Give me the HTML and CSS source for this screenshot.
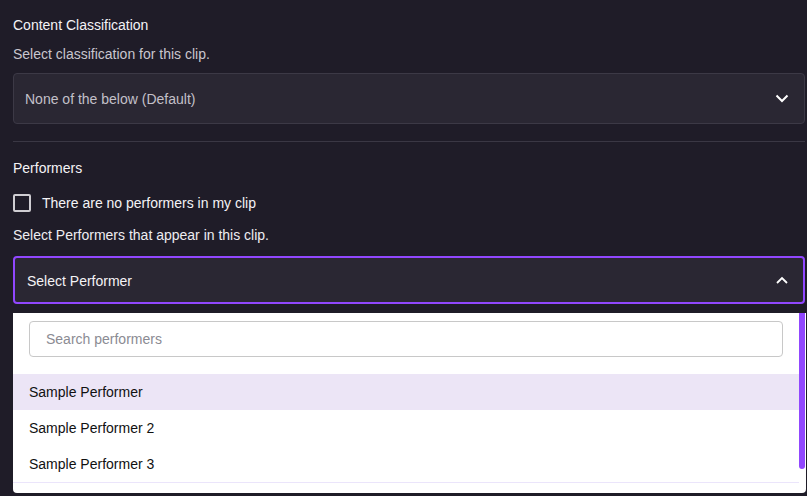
FILE: index.html
```html
<!DOCTYPE html>
<html lang="en">
<head>
<meta charset="utf-8">
<link rel="stylesheet" href="styles.css">
</head>
<body>
<div class="page">
  <section class="group">
    <div class="title">Content Classification</div>
    <div class="desc">Select classification for this clip.</div>
    <div class="select">
      <span class="value">None of the below (Default)</span>
      <svg class="chev" width="14" height="9" viewBox="0 0 14 9"><path d="M1.5 1.5 L7 7 L12.5 1.5" fill="none" stroke="#ffffff" stroke-width="2"/></svg>
    </div>
  </section>
  <hr class="divider">
  <section class="group">
    <div class="title">Performers</div>
    <label class="check-row"><span class="box"></span><span class="check-label">There are no performers in my clip</span></label>
    <div class="desc desc-white">Select Performers that appear in this clip.</div>
    <div class="select select-open">
      <span class="value value-white">Select Performer</span>
      <svg class="chev chev-up" width="14" height="9" viewBox="0 0 14 9"><path d="M2 7 L7 2 L12 7" fill="none" stroke="#ffffff" stroke-width="1.8"/></svg>
    </div>
    <div class="menu">
      <div class="menu-search"><div class="search">Search performers</div></div>
      <div class="item item-active">Sample Performer</div>
      <div class="item">Sample Performer 2</div>
      <div class="item">Sample Performer 3</div>
      <div class="menu-foot"></div>
      <div class="scroll-thumb"></div>
    </div>
  </section>
</div>
</body>
</html>
```
FILE: styles.css
```css
html, body {
  margin: 0;
  padding: 0;
  background: #1f1c28;
  font-family: "Liberation Sans", Arial, sans-serif;
  font-size: 14px;
  color: #efeff1;
  overflow: hidden;
}
.page {
  padding: 15px 2px 0 13px;
}
.group {
  display: flex;
  flex-direction: column;
}
.title {
  line-height: 20px;
  color: #f4f3f6;
}
.desc {
  line-height: 20px;
  margin-top: 9px;
  color: #c9c6ce;
}
.desc-white {
  color: #eeedf1;
  margin-top: 12px;
}
.select {
  margin-top: 9px;
  height: 51px;
  box-sizing: border-box;
  border: 1px solid #3c3946;
  border-radius: 4px;
  background: #2a2733;
  display: flex;
  align-items: center;
  justify-content: space-between;
  padding: 0 15px 0 11px;
}
.value {
  color: #c3c0c9;
}
.value-white {
  color: #f4f3f6;
  padding-top: 2px;
}
.chev {
  display: block;
}
.select-open {
  margin-top: 11px;
  height: 48px;
  border: 2px solid #9147ff;
  padding: 0 13px 0 12px;
}
.chev-up {
  margin-right: 1px;
}
.divider {
  margin: 17px 0 16px;
  border: 0;
  border-top: 1px solid #3a3744;
  height: 0;
}
.check-row {
  display: flex;
  align-items: center;
  gap: 11px;
  margin-top: 15px;
  line-height: 20px;
}
.box {
  width: 18px;
  height: 18px;
  box-sizing: border-box;
  border: 2px solid #cfcdd2;
  border-radius: 2px;
}
.check-label {
  color: #f4f3f6;
}
.menu {
  position: relative;
  margin-top: 9px;
  margin-right: -1px;
  background: #ffffff;
  border-radius: 0 0 4px 4px;
  padding-right: 7px;
  height: 180px;
  box-sizing: border-box;
  color: #1a1a1a;
}
.menu-search {
  padding: 8px 16px 17px;
}
.search {
  height: 36px;
  box-sizing: border-box;
  border: 1px solid #c8c8c8;
  border-radius: 4px;
  display: flex;
  align-items: center;
  padding-left: 16px;
  color: #8b8b93;
}
.item {
  height: 36px;
  display: flex;
  align-items: center;
  padding-left: 16px;
  color: #111111;
}
.item-active {
  background: #ece5f6;
}
.menu-foot {
  border-top: 1px solid #ebe5fb;
}
.scroll-thumb {
  position: absolute;
  right: 1px;
  top: 0;
  width: 6px;
  height: 156px;
  background: #9147ff;
  border-radius: 0 0 3px 3px;
}
```
